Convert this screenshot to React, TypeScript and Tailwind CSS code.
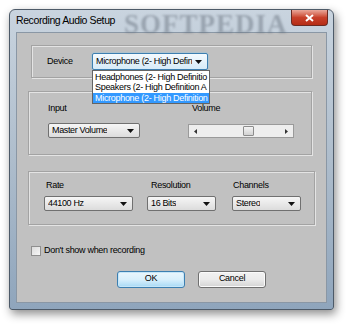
import { useState } from 'react';

const font = { fontFamily: '"Liberation Sans", Arial, sans-serif' };

function Arrow() {
  return (
    <svg width="7" height="4" viewBox="0 0 7 4" className="shrink-0">
      <path d="M0 0h7L3.5 4z" fill="#111" />
    </svg>
  );
}

function Combo({ text, width, focused = false, height = 15 }: { text: string; width: string; focused?: boolean; height?: number }) {
  return (
    <div
      className={`flex items-center justify-between pl-[3px] pr-[5px] rounded-[2px] border text-[9px] tracking-[-0.35px] text-black ${width} ${
        focused
          ? 'border-[#3c7fb1] bg-gradient-to-b from-[#f4fafe] to-[#d6ebf8] shadow-[0_0_2px_#7ec4ec]'
          : 'border-[#707070] bg-gradient-to-b from-[#f6f6f6] to-[#dcdcdc]'
      }`}
      style={{ height }}
    >
      <span className="whitespace-nowrap overflow-hidden">{text}</span>
      <Arrow />
    </div>
  );
}

export default function App() {
  const [checked, setChecked] = useState(false);
  const devices = ['Headphones (2- High Definitio', 'Speakers (2- High Definition A', 'Microphone (2- High Definition'];

  return (
    <div className="w-[350px] h-[325px] bg-white overflow-hidden pt-[9px] pl-[9px]" style={font}>
      {/* window frame */}
      <div className="w-[325px] h-[301px] rounded-t-[6px] rounded-b-[3px] border border-[#4d5a68] bg-gradient-to-b from-[#c9d4df] via-[#aebdcc] to-[#8fa5bc] shadow-[2px_4px_10px_rgba(0,0,0,0.45)] flex flex-col">
        {/* title bar */}
        <div className="relative h-[22px] flex items-center pl-[6px] shrink-0">
          <span className="text-[10.5px] tracking-[-0.4px] text-black">Recording Audio Setup</span>
          <span
            className="absolute left-[114px] top-[-6px] text-[27px] font-bold tracking-[1px] text-[#55606c]/40 blur-[1.2px]"
            style={{ fontFamily: '"Liberation Serif", serif' }}
          >
            SOFTPEDIA
          </span>
          <div className="ml-auto mr-[5px] self-start w-[37px] h-[16px] rounded-b-[4px] border border-[#6b2a22] border-t-0 bg-gradient-to-b from-[#e9a79a] via-[#c8402a] to-[#b52d16] flex items-center justify-center">
            <svg width="9" height="8" viewBox="0 0 9 8">
              <path d="M1 1l7 6M8 1L1 7" stroke="#fff" strokeWidth="2" />
            </svg>
          </div>
        </div>

        {/* client area */}
        <div className="mx-[6px] h-[271px] bg-[#c1c1c1] border border-[#8a97a5] flex flex-col text-[9px] tracking-[-0.3px] text-black">
          {/* device group */}
          <div className="mt-[12px] ml-[14px] w-[281px] h-[33px] border border-[#a3a3a3] shadow-[inset_1px_1px_0_#e4e4e4,1px_1px_0_#e4e4e4] flex items-center">
            <span className="ml-[15px] w-[45px]">Device</span>
            <div className="relative">
              <Combo text="Microphone (2- High Defin" width="w-[116px]" focused height={17} />
              <div className="absolute left-0 top-[17px] w-[118px] h-[34px] bg-white border border-[#646464] z-10 flex flex-col pt-[1px] leading-[10.5px] text-[9px] tracking-[-0.3px]">
                {devices.map((d, i) => (
                  <div
                    key={d}
                    className={`px-[2px] h-[10.5px] whitespace-nowrap overflow-hidden ${i === 2 ? 'bg-[#3399ff] text-white' : 'text-black'}`}
                  >
                    {d}
                  </div>
                ))}
              </div>
            </div>
          </div>

          {/* input / volume group */}
          <div className="mt-[13px] ml-[11px] w-[284px] h-[64px] border border-[#a3a3a3] shadow-[inset_1px_1px_0_#e4e4e4,1px_1px_0_#e4e4e4] flex">
            <div className="ml-[19px] w-[140px] flex flex-col">
              <span className="mt-[10px] h-[12px]">Input</span>
              <div className="mt-[9px]">
                <Combo text="Master Volume" width="w-[92px]" />
              </div>
            </div>
            <div className="flex flex-col">
              <span className="mt-[10px] h-[12px] ml-[4px]">Volume</span>
              <div className="relative mt-[10px] w-[106px] h-[14px] border border-[#9a9a9a] bg-[#eeeeee] flex items-center justify-between px-[5px]">
                <svg width="3" height="5" viewBox="0 0 3 5">
                  <path d="M3 0v5L0 2.5z" fill="#333" />
                </svg>
                <svg width="3" height="5" viewBox="0 0 3 5">
                  <path d="M0 0v5l3-2.5z" fill="#333" />
                </svg>
                <div className="absolute left-[54px] top-[1px] w-[11px] h-[10px] rounded-[1px] border border-[#8c8c8c] bg-gradient-to-b from-[#f4f4f4] to-[#d2d2d2]" />
              </div>
            </div>
          </div>

          {/* rate group */}
          <div className="mt-[16px] ml-[11px] w-[287px] h-[54px] border border-[#a3a3a3] shadow-[inset_1px_1px_0_#e4e4e4,1px_1px_0_#e4e4e4] flex">
            <div className="ml-[15px] w-[103px] flex flex-col">
              <span className="mt-[7px] h-[12px] ml-[2px]">Rate</span>
              <div className="mt-[5px]">
                <Combo text="44100 Hz" width="w-[89px]" />
              </div>
            </div>
            <div className="w-[85px] flex flex-col">
              <span className="mt-[7px] h-[12px] ml-[4px]">Resolution</span>
              <div className="mt-[5px]">
                <Combo text="16 Bits" width="w-[69px]" />
              </div>
            </div>
            <div className="flex flex-col">
              <span className="mt-[7px] h-[12px] ml-[1px]">Channels</span>
              <div className="mt-[5px]">
                <Combo text="Stereo" width="w-[69px]" />
              </div>
            </div>
          </div>

          {/* checkbox */}
          <label className="mt-[19px] ml-[14px] flex items-center gap-[3px] cursor-default">
            <span
              onClick={() => setChecked(!checked)}
              className="w-[10px] h-[10px] border border-[#8f8f8f] bg-gradient-to-br from-[#dcdcdc] to-[#f7f7f7] flex items-center justify-center text-[8px] leading-none"
            >
              {checked ? '✓' : ''}
            </span>
            <span>Don't show when recording</span>
          </label>

          {/* buttons */}
          <div className="mt-[13px] ml-[100px] flex gap-[13px]">
            <button className="w-[68px] h-[17px] rounded-[3px] border border-[#3c7fb1] bg-gradient-to-b from-[#eaf6fd] via-[#d9f0fc] to-[#a7d9f5] shadow-[inset_0_0_0_1px_#c6e6f8] text-[9px]">
              OK
            </button>
            <button className="w-[68px] h-[17px] rounded-[3px] border border-[#707070] bg-gradient-to-b from-[#f2f2f2] via-[#ebebeb] to-[#d4d4d4] shadow-[inset_0_0_0_1px_#fbfbfb] text-[9px]">
              Cancel
            </button>
          </div>
        </div>
      </div>
    </div>
  );
}
